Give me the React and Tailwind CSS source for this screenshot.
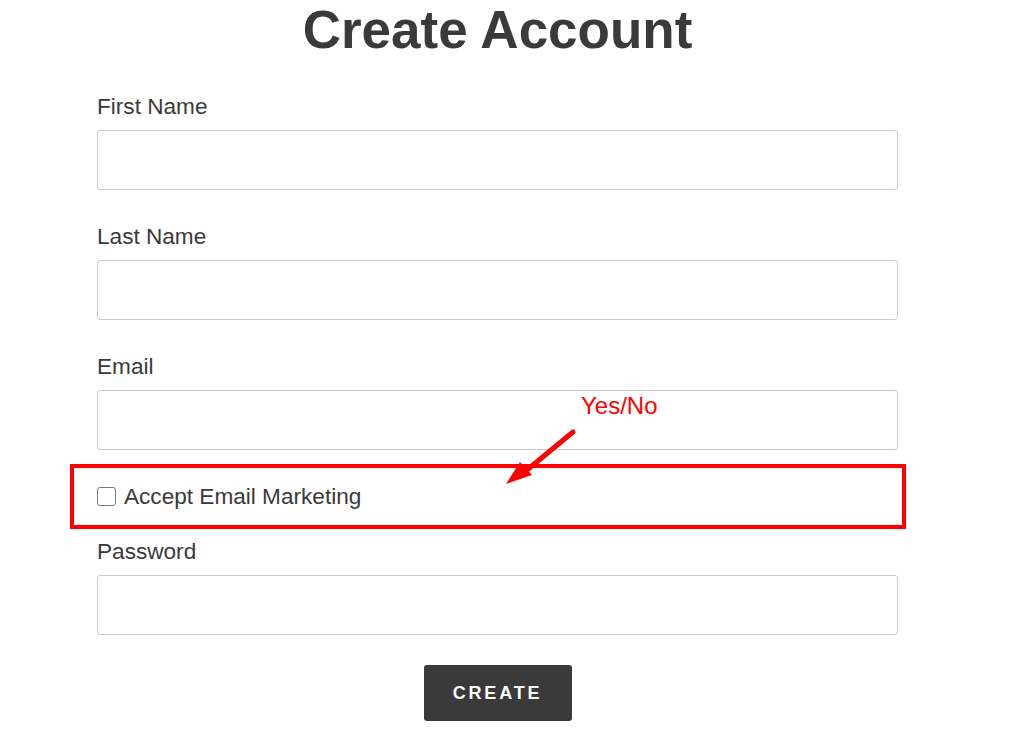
const Field = ({ label, type = "text" }) => {
  return (
    <div className="flex flex-col">
      <label className="text-[22.6px] leading-[24px] text-[#3a3a3a]">{label}</label>
      <input
        type={type}
        className="mt-[11px] h-[60px] w-full rounded-[3px] border border-[#cccccc] bg-white px-3 outline-none"
      />
    </div>
  );
};

const App = () => {
  return (
    <div
      className="relative min-h-[744px] bg-white"
      style={{ fontFamily: '"Liberation Sans", Arial, sans-serif' }}
    >
      <div className="ml-[97px] flex w-[801px] flex-col">
        <h1 className="pt-[2px] text-center text-[53px] font-bold leading-[56px] text-[#3a3a3a]">
          Create Account
        </h1>

        <form className="mt-[37px] flex flex-col">
          <div className="flex flex-col gap-[35px]">
            <Field label="First Name" />
            <Field label="Last Name" />
            <Field label="Email" type="email" />
          </div>

          {/* marketing opt-in, boxed in red */}
          <div className="-ml-[27px] -mr-[8px] mt-[14px] flex h-[65px] items-center border-4 border-[#ff0000] pl-[23px]">
            <input
              type="checkbox"
              className="h-[19px] w-[19px] appearance-none rounded-[3px] border border-[#7a7a7a] bg-white"
            />
            <span className="ml-[8px] text-[22.6px] leading-[24px] text-[#3a3a3a]">
              Accept Email Marketing
            </span>
          </div>

          <div className="mt-[11px]">
            <Field label="Password" type="password" />
          </div>

          <div className="mt-[30px] flex justify-center">
            <button
              type="button"
              className="h-[56px] w-[148px] rounded-[3px] bg-[#3a3a3a] text-[18px] font-bold tracking-[2.8px] text-white"
            >
              CREATE
            </button>
          </div>
        </form>
      </div>

      {/* annotation */}
      <span className="absolute left-[581px] top-[393px] text-[24px] leading-[26px] text-[#ff0000]">
        Yes/No
      </span>
      <svg
        className="absolute left-[500px] top-[425px]"
        width="80"
        height="65"
        viewBox="0 0 80 65"
      >
        <line x1="73" y1="7" x2="27" y2="45" stroke="#ff0000" strokeWidth="5" strokeLinecap="round" />
        <polygon points="6,59 20,37 32,50" fill="#ff0000" />
      </svg>
    </div>
  );
};

export default App;
